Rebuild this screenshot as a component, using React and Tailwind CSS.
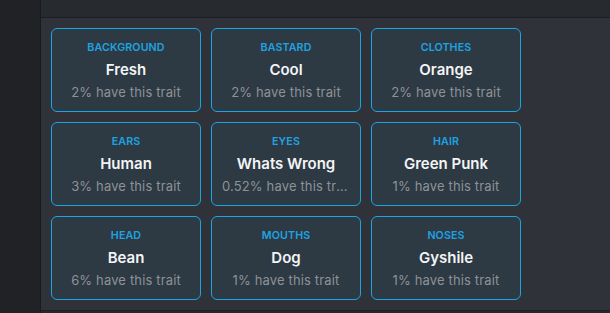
import React from "react";

const traits = [
  ["BACKGROUND", "Fresh", "2% have this trait"],
  ["BASTARD", "Cool", "2% have this trait"],
  ["CLOTHES", "Orange", "2% have this trait"],
  ["EARS", "Human", "3% have this trait"],
  ["EYES", "Whats Wrong", "0.52% have this trait"],
  ["HAIR", "Green Punk", "1% have this trait"],
  ["HEAD", "Bean", "6% have this trait"],
  ["MOUTHS", "Dog", "1% have this trait"],
  ["NOSES", "Gyshile", "1% have this trait"],
];

export default function App() {
  return (
    <div
      className="flex h-[313px] w-[610px] overflow-hidden bg-[#2f3239]"
      style={{ fontFamily: "Inter, 'Open Sans', sans-serif" }}
    >
      <div className="w-[41px] shrink-0 bg-[#202225] border-r border-[#191b1e]" />
      <div className="flex flex-1 flex-col">
        <div className="h-[18px] shrink-0 bg-[#272a2f] border-b border-[#1b1d20]" />
        <div className="h-[293px] shrink-0 border-b border-[#1e2023] p-[10px]">
          <div className="grid grid-cols-[150px_150px_150px] gap-x-[10px] gap-y-[10px]">
            {traits.map(([label, value, sub]) => (
              <div
                key={label}
                className="flex h-[84px] flex-col items-center rounded-[6px] border border-[#1aa6e4] bg-[#2d3943] px-[10px] pt-[12px] text-center"
              >
                <div className="text-[10.7px] font-semibold leading-[14px] tracking-[0.1px] text-[#1ea3e2]">
                  {label}
                </div>
                <div className="mt-[4px] text-[15px] font-semibold leading-[22px] text-[#f3f4f5]">
                  {value}
                </div>
                <div className="mt-[1px] w-full truncate text-[13px] leading-[20px] tracking-[0.15px] text-[#8d9298]">
                  {sub}
                </div>
              </div>
            ))}
          </div>
        </div>
        <div className="flex-1 bg-[#25282c]" />
      </div>
    </div>
  );
}
